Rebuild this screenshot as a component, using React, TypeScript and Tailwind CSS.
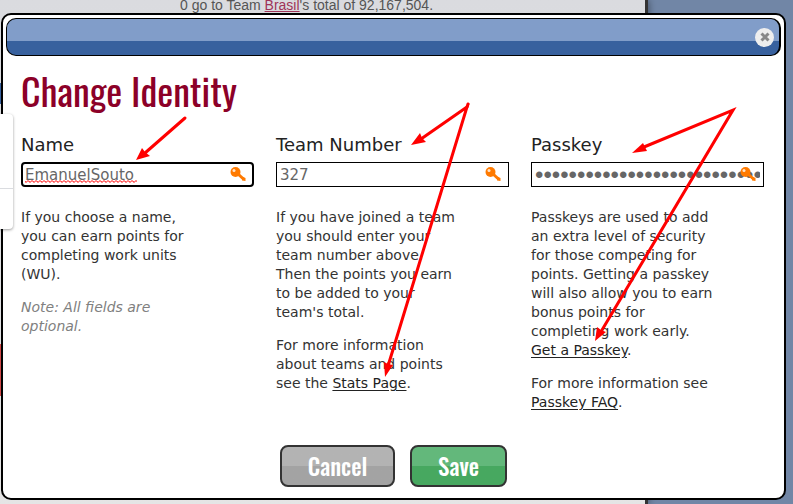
import type { ReactNode } from 'react'
import { clsx } from 'clsx'

const KeyIcon = () => (
  <svg
    viewBox="0 0 16 16"
    className="pointer-events-none absolute top-1 right-2 size-4"
    aria-hidden="true"
  >
    <path d="M8 8L13.500 13" stroke="#ff7a00" strokeWidth="3" />
    <path d="M10 11.500L12 13L12 14.500L15.500 15L15.500 12L13 11z" fill="#ff7a00" />
    <circle cx="5.500" cy="6" r="5" fill="#ff7a00" />
    <circle cx="4" cy="4.500" r="1.500" fill="#ffe3c8" />
  </svg>
)

const Squiggle = () => (
  <svg
    width="112"
    height="4"
    className="pointer-events-none absolute bottom-[3px] left-1"
    aria-hidden="true"
  >
    <defs>
      <pattern id="wave" width="4" height="4" patternUnits="userSpaceOnUse">
        <path d="M-1 0L1 2.500L3 .5L5 2.500" stroke="#f00" fill="none" />
      </pattern>
    </defs>
    <rect width="112" height="4" fill="url(#wave)" />
  </svg>
)

type FieldProps = {
  id: string
  label: string
  type?: string
  defaultValue: string
  active?: boolean
  children: ReactNode
}

const Field = ({
  id,
  label,
  type = 'text',
  defaultValue,
  active,
  children,
}: FieldProps) => {
  return (
    <div className="min-w-0">
      <label htmlFor={id} className="block text-[18px] leading-6 text-[#222]">
        {label}
      </label>
      <div className="relative mt-[5px]">
        <input
          id={id}
          type={type}
          defaultValue={defaultValue}
          spellCheck={false}
          className={clsx(
            'block h-[25px] w-full bg-white text-[#666] outline-none',
            active
              ? 'rounded border-2 border-black px-0.5'
              : 'border border-black px-[3px]',
            type === 'password'
              ? "font-['Liberation_Sans',Arial,sans-serif] text-[24px] leading-[23px]"
              : 'text-[15px]',
          )}
        />
        {active && <Squiggle />}
        <KeyIcon />
      </div>
      <div className="mt-[21px] flex max-w-[185px] flex-col gap-[14px] text-[14px] leading-[19px] text-[#333]">
        {children}
      </div>
    </div>
  )
}

const TextLink = ({ children }: { children: ReactNode }) => (
  <a href="#" className="text-[#222] underline underline-offset-2">
    {children}
  </a>
)

const Arrows = () => (
  <svg
    width="793"
    height="504"
    viewBox="0 0 793 504"
    className="pointer-events-none absolute top-0 left-0 max-w-none"
    aria-hidden="true"
  >
    <g stroke="#f00" strokeWidth="3" strokeLinecap="round" fill="none">
      <path d="M185 118L145 153" />
      <path d="M421 139L467 107L388 366" />
      <path d="M467 107L468 104" />
      <path d="M644 147L733 110L602 330" />
    </g>
    <g fill="#f00">
      <path d="M136 160L142 148L145 152L150 156z" />
      <path d="M411 145L420 133L422 138L426 142z" />
      <path d="M385 377L384 362L388 364L393 365z" />
      <path d="M632 153L643 143L645 147L647 151z" />
      <path d="M595 341L597 327L601 330L606 332z" />
    </g>
  </svg>
)

const Dialog = () => {
  return (
    <div
      role="dialog"
      aria-labelledby="dialog-title"
      className="absolute top-[13px] right-[7px] left-px rounded-[10px] border-2 border-black bg-white p-[3px] font-['DejaVu_Sans',Verdana,sans-serif]"
    >
      <div className="flex h-[38px] items-center justify-end rounded-[10px] border border-r-2 border-black bg-linear-to-b from-[#819dc9] from-60% to-[#38619e] to-60% pr-[5px]">
        <button
          type="button"
          aria-label="Close"
          className="flex size-[19px] items-center justify-center rounded-full bg-[#eee]"
        >
          <svg viewBox="0 0 10 10" className="size-[10px]" aria-hidden="true">
            <path d="M1.500 1.500l7 7M8.500 1.500l-7 7" stroke="#888" strokeWidth="3" />
          </svg>
        </button>
      </div>
      <form className="pr-[17px] pb-2 pl-[15px]">
        <h1
          id="dialog-title"
          className="mt-[10px] font-[Oswald,'Liberation_Sans_Narrow',sans-serif] text-[38px] leading-[48px] text-[#8c0028]"
        >
          Change Identity
        </h1>
        <div className="mt-[19px] grid grid-cols-3 gap-[22px]">
          <Field id="name" label="Name" defaultValue="EmanuelSouto" active>
            <p>
              If you choose a name, you can earn points for completing work
              units (WU).
            </p>
            <p className="text-[#808080] italic">
              Note: All fields are optional.
            </p>
          </Field>
          <Field id="team" label="Team Number" defaultValue="327">
            <p>
              If you have joined a team you should enter your team number above.
              Then the points you earn to be added to your team's total.
            </p>
            <p>
              For more information about teams and points see the{' '}
              <TextLink>Stats Page</TextLink>.
            </p>
          </Field>
          <Field
            id="passkey"
            label="Passkey"
            type="password"
            defaultValue="0123456789abcdef0123456789a"
          >
            <p>
              Passkeys are used to add an extra level of security for those
              competing for points. Getting a passkey will also allow you to
              earn bonus points for completing work early.{' '}
              <TextLink>Get a Passkey</TextLink>.
            </p>
            <p>
              For more information see <TextLink>Passkey FAQ</TextLink>.
            </p>
          </Field>
        </div>
        <div className="mt-[33px] flex justify-center gap-[15px] pl-0.5 font-[Oswald,'Liberation_Sans_Narrow',sans-serif] text-[23px] font-medium text-white [text-shadow:1px_1px_2px_rgba(0,0,0,0.3)]">
          <button
            type="button"
            className="h-[42px] w-[115px] rounded-lg border-2 border-[#333] bg-linear-to-b from-[#b3b3b3] from-50% to-[#a3a3a3] to-50%"
          >
            Cancel
          </button>
          <button
            type="submit"
            className="h-[42px] w-[97px] rounded-lg border-2 border-[#333] bg-linear-to-b from-[#63b87b] from-50% to-[#47a860] to-50%"
          >
            Save
          </button>
        </div>
      </form>
    </div>
  )
}

const App = () => {
  return (
    <div className="relative min-h-screen overflow-hidden bg-[#7186a6]">
      <div className="min-h-screen w-[648px] border-r-[3px] border-[#333] bg-linear-to-b from-[#dadbdf] to-[#e5e5e5] shadow-[0_0_8px_rgba(0,0,0,0.5)]">
        <p className="pl-[180px] font-['Liberation_Sans',Arial,sans-serif] text-[14px] leading-[11px] text-[#555]">
          0 go to Team{' '}
          <a href="#" className="text-[#a03358] underline">
            Brasil
          </a>
          's total of 92,167,504.
        </p>
        <div className="mt-[72px] h-[21px] w-px bg-[#38619e]" />
        <div className="mt-[240px] h-[52px] w-px bg-[#d04848]" />
      </div>
      <Dialog />
      <div className="absolute top-[114px] left-0 w-[13px] rounded-r bg-white shadow-[0_1px_3px_rgba(0,0,0,0.4)]">
        <div className="h-[75px] border-b border-[#dadce0]" />
        <div className="h-10" />
      </div>
      <Arrows />
    </div>
  )
}

export default App
